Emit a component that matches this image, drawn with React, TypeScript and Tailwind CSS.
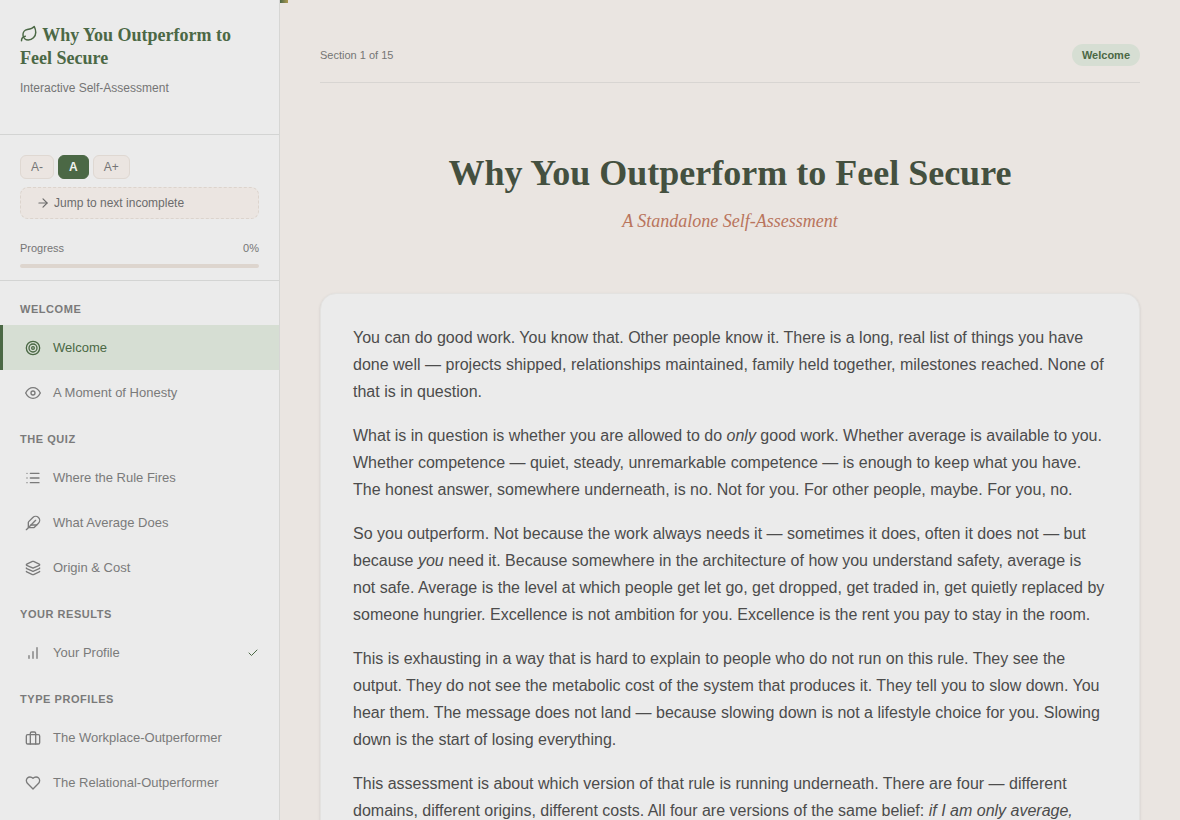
import { useState } from "react";
import type { ReactNode } from "react";
import { ArrowRight, Check, Feather, Home, Layers, List } from "lucide-react";

type NavItem = {
  id: string;
  label: string;
  icon: ReactNode;
  done?: boolean;
};

type NavGroup = {
  title: string;
  items: NavItem[];
};

const Icon = ({ className, children }: { className: string; children: ReactNode }) => (
  <svg
    viewBox="0 0 24 24"
    className={className}
    fill="none"
    stroke="currentColor"
    strokeWidth="2"
    strokeLinecap="round"
    strokeLinejoin="round"
    aria-hidden="true"
  >
    {children}
  </svg>
);

const LeafIcon = () => (
  <Icon className="inline-block h-[18px] w-[18px] align-[-2px]">
    <path d="M11 20A7 7 0 0 1 9.8 6.1C15.5 5 17 4.48 19 2c1 2 2 4.18 2 8 0 5.5-4.78 10-10 10Z" />
    <path d="M2 21c0-3 1.85-5.36 5.08-6" />
  </Icon>
);

const TargetIcon = () => (
  <Icon className="h-4 w-4">
    <circle cx="12" cy="12" r="10" />
    <circle cx="12" cy="12" r="6" />
    <circle cx="12" cy="12" r="2" />
  </Icon>
);

const EyeIcon = () => (
  <Icon className="h-4 w-4">
    <path d="M1 12s4-8 11-8 11 8 11 8-4 8-11 8-11-8-11-8z" />
    <circle cx="12" cy="12" r="3" />
  </Icon>
);

const BarsIcon = () => (
  <Icon className="h-4 w-4">
    <path d="M18 20V4" />
    <path d="M12 20V10" />
    <path d="M6 20v-4" />
  </Icon>
);

const CaseIcon = () => (
  <Icon className="h-4 w-4">
    <rect x="2" y="7" width="20" height="14" rx="2" />
    <path d="M16 21V5a2 2 0 0 0-2-2h-4a2 2 0 0 0-2 2v16" />
  </Icon>
);

const HeartIcon = () => (
  <Icon className="h-4 w-4">
    <path d="M19 14c1.49-1.46 3-3.21 3-5.5A5.5 5.5 0 0 0 16.5 3c-1.76 0-3 .5-4.5 2-1.5-1.5-2.74-2-4.5-2A5.5 5.5 0 0 0 2 8.5c0 2.3 1.5 4.05 3 5.5l7 7Z" />
  </Icon>
);

const groups: NavGroup[] = [
  {
    title: "Welcome",
    items: [
      { id: "welcome", label: "Welcome", icon: <TargetIcon /> },
      { id: "honesty", label: "A Moment of Honesty", icon: <EyeIcon /> },
    ],
  },
  {
    title: "The Quiz",
    items: [
      { id: "rule", label: "Where the Rule Fires", icon: <List size={16} /> },
      { id: "average", label: "What Average Does", icon: <Feather size={16} /> },
      { id: "origin", label: "Origin & Cost", icon: <Layers size={16} /> },
    ],
  },
  {
    title: "Your Results",
    items: [{ id: "profile", label: "Your Profile", icon: <BarsIcon />, done: true }],
  },
  {
    title: "Type Profiles",
    items: [
      { id: "workplace", label: "The Workplace-Outperformer", icon: <CaseIcon /> },
      { id: "relational", label: "The Relational-Outperformer", icon: <HeartIcon /> },
      { id: "family", label: "The Family-Outperformer", icon: <Home size={16} /> },
    ],
  },
];

const sizes = ["A-", "A", "A+"];

const Sidebar = () => {
  const [active, setActive] = useState("welcome");
  const [size, setSize] = useState("A");

  return (
    <aside className="flex h-screen w-[280px] shrink-0 flex-col overflow-hidden border-r border-[#d6d6d4] bg-[#ebebeb]">
      <div className="border-b border-[#d3d4d3] px-5 pt-6 pb-[37px]">
        <h2 className="font-['Liberation_Serif',serif] text-lg leading-[23px] font-bold text-[#4b6845]">
          <LeafIcon /> Why You Outperform to Feel Secure
        </h2>
        <p className="mt-[9px] text-xs leading-[18px] text-[#757575]">Interactive Self-Assessment</p>
      </div>

      {/* Text size and progress */}
      <div className="border-b border-[#d3d4d3] px-5 pt-5 pb-3">
        <div className="flex gap-1">
          {sizes.map((s) => (
            <button
              key={s}
              type="button"
              onClick={() => setSize(s)}
              className={
                s === size
                  ? "h-6 rounded-md border border-[#4b6845] bg-[#4b6845] px-2.5 text-xs font-bold text-[#f0f3ee]"
                  : "h-6 rounded-md border border-[#dfd8d2] bg-[#ebe5e1] px-2.5 text-xs text-[#757575]"
              }
            >
              {s}
            </button>
          ))}
        </div>
        <button
          type="button"
          className="mt-2 flex h-8 w-full items-center gap-1 rounded-lg border border-dashed border-[#dcd4cd] bg-[#ebe5e1] px-[15px] text-xs text-[#6c6c6c]"
        >
          <ArrowRight size={14} />
          Jump to next incomplete
        </button>
        <div className="mt-5 flex justify-between text-[11px] leading-[18px] text-[#757575]">
          <span>Progress</span>
          <span>0%</span>
        </div>
        <div className="mt-[7px] h-1 rounded-sm bg-[#ddd5ce]" />
      </div>

      <nav className="pt-1">
        {groups.map((group) => (
          <div key={group.title}>
            <h3 className="px-5 pt-4 pb-2 text-[11px] leading-4 font-bold tracking-wider text-[#7a7a7a] uppercase">
              {group.title}
            </h3>
            {group.items.map((item) => (
              <button
                key={item.id}
                type="button"
                onClick={() => setActive(item.id)}
                className={
                  item.id === active
                    ? "flex h-[45px] w-full items-center gap-2.5 border-l-3 border-[#4b6845] bg-[#d6ded3] px-5 text-left text-[13px] text-[#4b6845]"
                    : "flex h-[45px] w-full items-center gap-2.5 border-l-3 border-transparent px-5 text-left text-[13px] text-[#7a7a7a]"
                }
              >
                <span className="flex w-5 justify-center">{item.icon}</span>
                <span className="flex-1">{item.label}</span>
                {item.done && <Check size={12} className="text-[#4b6845]" />}
              </button>
            ))}
          </div>
        ))}
      </nav>
    </aside>
  );
};

const App = () => {
  return (
    <div className="flex h-screen overflow-hidden bg-[#eae5e1] font-['Liberation_Sans',Arial,sans-serif]">
      <Sidebar />
      <main className="min-w-0 flex-1 overflow-hidden">
        <div className="h-[3px]">
          <div className="h-full w-2 bg-linear-to-r from-[#4b6845] to-[#b09a50]" />
        </div>
        <div className="mx-auto max-w-[900px] px-10 pt-[41px]">
          <header className="flex items-center justify-between border-b border-[#d8d5d2] pb-4">
            <span className="text-[11px] leading-5 text-[#757575]">Section 1 of 15</span>
            <span className="rounded-full bg-[#d6ded3] px-2.5 text-[11px] leading-[22px] font-bold text-[#4b6845]">
              Welcome
            </span>
          </header>

          <div className="pt-[66px] pb-[58px] text-center font-['Liberation_Serif',serif]">
            <h1 className="text-4xl leading-[48px] font-bold text-[#44503f]">
              Why You Outperform to Feel Secure
            </h1>
            <p className="mt-[11px] text-lg leading-[27px] text-[#b9745c] italic">A Standalone Self-Assessment</p>
          </div>

          <article className="flex flex-col gap-[17px] rounded-2xl border border-[#e3e2e0] bg-[#ebebeb] px-8 py-[30px] text-base leading-[27px] text-[#4c4c4c] shadow-sm">
            <p>
              You can do good work. You know that. Other people know it. There is a long, real list of things you
              have done well — projects shipped, relationships maintained, family held together, milestones reached.
              None of that is in question.
            </p>
            <p>
              What is in question is whether you are allowed to do <em>only</em> good work. Whether average is
              available to you. Whether competence — quiet, steady, unremarkable competence — is enough to keep what
              you have. The honest answer, somewhere underneath, is no. Not for you. For other people, maybe. For
              you, no.
            </p>
            <p>
              So you outperform. Not because the work always needs it — sometimes it does, often it does not — but
              because <em>you</em> need it. Because somewhere in the architecture of how you understand safety,
              average is not safe. Average is the level at which people get let go, get dropped, get traded in, get
              quietly replaced by someone hungrier. Excellence is not ambition for you. Excellence is the rent you
              pay to stay in the room.
            </p>
            <p>
              This is exhausting in a way that is hard to explain to people who do not run on this rule. They see
              the output. They do not see the metabolic cost of the system that produces it. They tell you to slow
              down. You hear them. The message does not land — because slowing down is not a lifestyle choice for
              you. Slowing down is the start of losing everything.
            </p>
            <p>
              This assessment is about which version of that rule is running underneath. There are four — different
              domains, different origins, different costs. All four are versions of the same belief:{" "}
              <em>if I am only average, something will be taken away.</em>
            </p>
          </article>
        </div>
      </main>
    </div>
  );
};

export default App;
